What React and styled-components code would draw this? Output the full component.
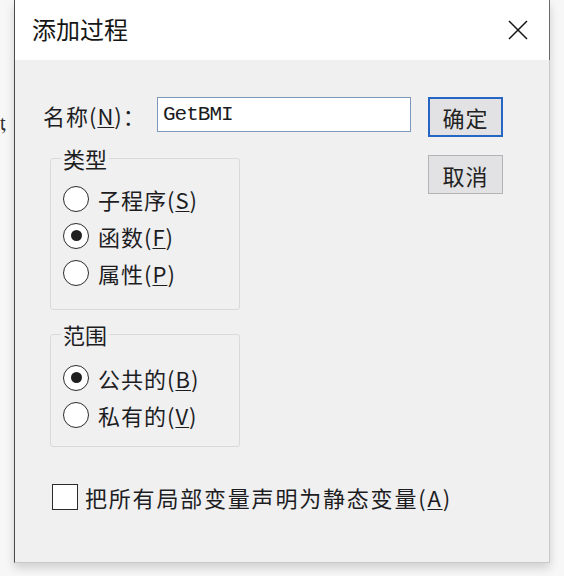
import * as React from 'react'
import styled, { createGlobalStyle } from 'styled-components'

const GlobalStyle = createGlobalStyle`
  html, body {
    margin: 0;
    padding: 0;
  }
  body {
    background: #f7f7f7;
    font-family: "Noto Sans CJK SC", "Noto Sans", sans-serif;
    color: #1d1d1f;
  }
`

const Desktop = styled.div`
  position: relative;
  height: 576px;
  overflow: hidden;
  padding-left: 14px;
  box-sizing: border-box;
`

// a bit of the document that the dialog covers
const DocFragment = styled.span`
  position: absolute;
  left: 0;
  top: 112px;
  font-family: "Liberation Serif", "Noto Sans CJK SC", serif;
  font-size: 20px;
  letter-spacing: -4px;
  color: #333;
`

const Dialog = styled.div`
  position: relative;
  z-index: 1;
  width: 536px;
  height: 563px;
  box-sizing: border-box;
  background: #f0f0f1;
  border-left: 1px solid #4a4a4a;
  border-right: 1px solid #c9c9cb;
  border-bottom: 1px solid #c9c9cb;
  box-shadow: 0 5px 9px rgba(0, 0, 0, 0.16);
  display: flex;
  flex-direction: column;
`

const TitleBar = styled.div`
  height: 60px;
  flex: none;
  background: #ffffff;
  display: flex;
  align-items: center;
  justify-content: space-between;
  padding: 0 11px 0 17px;
  border-right: 1px solid #6a6a6a;
  margin-right: -1px;
`

const Title = styled.div`
  font-size: 24px;
  line-height: 24px;
  margin-top: -3px;
  color: #161616;
`

const CloseButton = styled.div`
  width: 40px;
  height: 40px;
  display: flex;
  align-items: center;
  justify-content: center;
  svg {
    width: 20px;
    height: 20px;
  }
`

const Content = styled.div`
  padding: 37px 0 0 28px;
  display: flex;
  flex-direction: column;
`

const Form = styled.div`
  display: flex;
  align-items: flex-start;
`

const LeftCol = styled.div`
  display: flex;
  flex-direction: column;
`

const NameRow = styled.div`
  display: flex;
  align-items: center;
  height: 35px;
`

const Label = styled.label`
  width: 114px;
  font-size: 22px;
  letter-spacing: 1px;
  line-height: 22px;
  u {
    text-decoration-thickness: 1px;
    text-underline-offset: 2px;
  }
`

const NameInput = styled.input`
  width: 254px;
  height: 35px;
  box-sizing: border-box;
  border: 1px solid #7c98bd;
  background: #ffffff;
  padding: 0 5px;
  font-family: "Liberation Mono", "DejaVu Sans Mono", monospace;
  font-size: 21px;
  letter-spacing: -1px;
  color: #1b1b22;
  outline: none;
`

const Group = styled.fieldset`
  width: 190px;
  box-sizing: border-box;
  margin: ${(p) => p.$top}px 0 0 7px;
  padding: ${(p) => p.$padTop}px 0 ${(p) => p.$padBottom}px 12px;
  border: 1px solid #d9d9dc;
  border-radius: 3px;
  min-inline-size: 0;
  legend {
    padding: 0 2px;
    margin-left: -2px;
    font-size: 22px;
    line-height: 20px;
  }
`

const OptionRow = styled.div`
  display: flex;
  align-items: center;
  height: 37px;
  gap: ${(p) => p.$gap || 9}px;
  font-size: 22px;
  line-height: 22px;
  letter-spacing: ${(p) => p.$spacing || 1}px;
  white-space: nowrap;
  u {
    text-decoration-thickness: 1px;
    text-underline-offset: 2px;
  }
`

const RadioCircle = styled.span`
  flex: none;
  width: 26px;
  height: 26px;
  box-sizing: border-box;
  border-radius: 50%;
  border: 1.5px solid #2b2b2b;
  background: #ffffff;
  display: flex;
  align-items: center;
  justify-content: center;
  &::after {
    content: '';
    width: 11px;
    height: 11px;
    border-radius: 50%;
    background: #1f1f1f;
    display: ${(p) => (p.$checked ? 'block' : 'none')};
  }
`

const CheckBox = styled.span`
  flex: none;
  width: 26px;
  height: 26px;
  box-sizing: border-box;
  border: 1.5px solid #2b2b2b;
  background: #ffffff;
`

const ButtonCol = styled.div`
  display: flex;
  flex-direction: column;
  gap: 18px;
  margin-left: 17px;
`

const DialogButton = styled.div`
  width: 75px;
  height: ${(p) => (p.$primary ? 40 : 39)}px;
  box-sizing: border-box;
  border: ${(p) => (p.$primary ? '2px solid #2566c4' : '1px solid #b4b4b6')};
  background: #e2e2e4;
  display: flex;
  align-items: center;
  justify-content: center;
  font-size: 22px;
  letter-spacing: 1px;
  color: #222;
`

const CheckRow = styled(OptionRow)`
  margin: 37px 0 0 9px;
  height: 26px;
`

const Radio = ({ checked, text, mnemonic }) => (
  <OptionRow>
    <RadioCircle $checked={checked} />
    <span>
      {text}(<u>{mnemonic}</u>)
    </span>
  </OptionRow>
)

export default function App() {
  return (
    <>
      <GlobalStyle />
      <Desktop>
        <DocFragment>t,</DocFragment>
        <Dialog>
          <TitleBar>
            <Title>添加过程</Title>
            <CloseButton>
              <svg viewBox="0 0 20 20" fill="none" stroke="#141414" strokeWidth="1.5">
                <path d="M1 1 L19 19 M19 1 L1 19" />
              </svg>
            </CloseButton>
          </TitleBar>

          <Content>
            <Form>
              <LeftCol>
                <NameRow>
                  <Label>
                    名称(<u>N</u>)：
                  </Label>
                  <NameInput defaultValue="GetBMI" readOnly />
                </NameRow>

                {/* 类型 */}
                <Group $top={16} $padTop={12} $padBottom={18}>
                  <legend>类型</legend>
                  <Radio text="子程序" mnemonic="S" />
                  <Radio checked text="函数" mnemonic="F" />
                  <Radio text="属性" mnemonic="P" />
                </Group>

                {/* 范围 */}
                <Group $top={14} $padTop={15} $padBottom={13}>
                  <legend>范围</legend>
                  <Radio checked text="公共的" mnemonic="B" />
                  <Radio text="私有的" mnemonic="V" />
                </Group>
              </LeftCol>

              <ButtonCol>
                <DialogButton $primary>确定</DialogButton>
                <DialogButton>取消</DialogButton>
              </ButtonCol>
            </Form>

            <CheckRow $gap={7} $spacing={1.8}>
              <CheckBox />
              <span>
                把所有局部变量声明为静态变量(<u>A</u>)
              </span>
            </CheckRow>
          </Content>
        </Dialog>
      </Desktop>
    </>
  )
}
